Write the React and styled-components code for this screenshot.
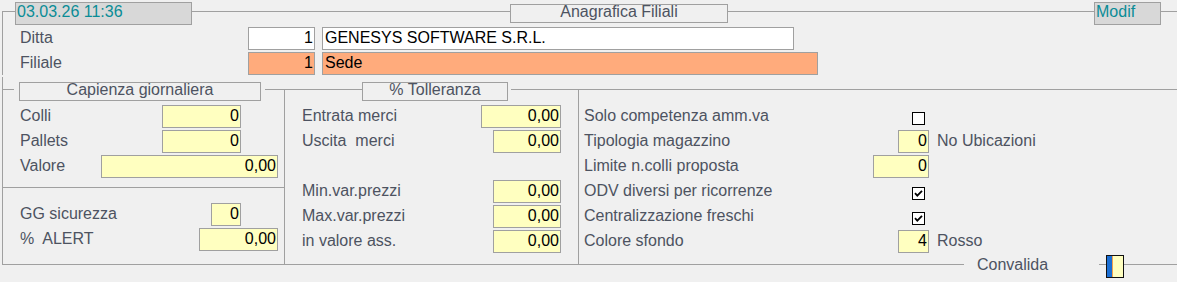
import React from "react";
import styled, { createGlobalStyle } from "styled-components";

// Anagrafica Filiali form - legacy style data entry mask

const LINE = "#a0a0a0";
const LABEL = "#4d5361";
const TEAL = "#0a8c96";

const GlobalStyle = createGlobalStyle`
  html, body {
    margin: 0;
    padding: 0;
    background: #f0f0f0;
  }
  body {
    font-family: "Liberation Sans", Arial, sans-serif;
    font-size: 16px;
  }
  * { box-sizing: border-box; }
`;

const Screen = styled.div`
  width: 1175px;
  height: 282px;
  margin-left: 2px;
  overflow: hidden;
`;

/* ---------- title bar ---------- */

const TitleBar = styled.div`
  display: flex;
  height: 23px;
  margin-top: 2px;
`;

const Corner = styled.div`
  width: 13px;
  height: 14px;
  align-self: flex-end;
  border-top: 1px solid ${LINE};
  border-left: 1px solid ${LINE};
`;

const Rule = styled.div`
  height: 1px;
  align-self: flex-start;
  margin-top: ${(p) => p.$top}px;
  background: ${LINE};
  ${(p) => (p.$w ? `width: ${p.$w}px; flex: none;` : "flex: 1;")}
  margin-left: ${(p) => p.$gapL || 0}px;
`;

const StatusBox = styled.div`
  width: ${(p) => p.$w}px;
  height: 23px;
  border: 1px solid ${LINE};
  background: #d8d8d8;
  color: ${TEAL};
  line-height: 17px;
  padding-left: 1px;
  white-space: nowrap;
`;

const CaptionBox = styled.div`
  width: ${(p) => p.$w}px;
  height: 19px;
  margin-top: ${(p) => p.$top || 0}px;
  margin-left: ${(p) => p.$gapL || 0}px;
  border: 1px solid ${LINE};
  color: ${LABEL};
  text-align: center;
  line-height: 14px;
  white-space: nowrap;
`;

/* ---------- top frame ---------- */

const TopBody = styled.div`
  height: 50px;
  padding-top: 2px;
  border-left: 1px solid ${LINE};
`;

const TopRow = styled.div`
  display: flex;
  align-items: center;
  height: 23px;
  margin-bottom: 2px;
`;

const Label = styled.div`
  color: ${LABEL};
  white-space: nowrap;
  line-height: 18px;
  margin-bottom: 2px;
  width: ${(p) => (p.$w ? `${p.$w}px` : "auto")};
  padding-left: ${(p) => p.$pl || 0}px;
  flex: none;
`;

const tones = {
  white: "#ffffff",
  orange: "#ffab7c",
  yellow: "#ffffc0",
};

const Box = styled.div`
  width: ${(p) => p.$w}px;
  height: 23px;
  flex: none;
  border: 1px solid ${LINE};
  background: ${(p) => tones[p.$tone || "yellow"]};
  color: #000;
  line-height: 19px;
  padding: 0 1px 0 2px;
  text-align: ${(p) => (p.$left ? "left" : "right")};
  white-space: nowrap;
  overflow: hidden;
  margin-left: ${(p) => (p.$ml !== undefined ? `${p.$ml}px` : "auto")};
  margin-right: ${(p) => p.$mr || 0}px;
`;

/* ---------- middle panels ---------- */

const Panels = styled.div`
  display: grid;
  grid-template-columns: 282px 294px 1fr;
  height: 175px;
  margin-top: 14px;
`;

const Panel = styled.div`
  position: relative;
  border-left: 1px solid ${LINE};

  ${(p) =>
    p.$lead &&
    `&::before {
      content: "";
      position: absolute;
      left: -1px;
      top: -12px;
      width: 1px;
      height: 12px;
      background: ${LINE};
    }`}
`;

const PanelHead = styled.div`
  display: flex;
  height: 19px;
  margin-top: -7px;
  margin-bottom: 4px;
`;

const Field = styled.div`
  display: flex;
  align-items: center;
  height: 23px;
  margin-bottom: 2px;
  padding-left: ${(p) => p.$pl}px;
`;

const Divider = styled.div`
  height: 1px;
  background: ${LINE};
  margin: 9px 0 15px;
`;

const Spacer = styled.div`
  height: 25px;
`;

const OptRow = styled.div`
  display: grid;
  grid-template-columns: 345px 1fr;
  align-items: center;
  height: 23px;
  margin-bottom: 2px;
  padding-left: 5px;
`;

const OptCell = styled.div`
  display: flex;
  align-items: center;
  height: 23px;
`;

const Suffix = styled.div`
  color: ${LABEL};
  padding-left: 8px;
  line-height: 18px;
  margin-bottom: 2px;
  white-space: nowrap;
`;

const Check = styled.svg`
  margin-left: auto;
  margin-right: 4px;
  margin-top: 4px;
  flex: none;
`;

/* ---------- footer ---------- */

const Footer = styled.div`
  display: flex;
  height: 23px;
  margin-top: -9px;
`;

const FootLabel = styled.div`
  width: 135px;
  padding-left: 13px;
  color: ${LABEL};
  line-height: 20px;
`;

const Toggle = styled.div`
  display: flex;
  width: 18px;
  height: 23px;
  border: 1px solid #111;
  background: #ffffc0;
`;

const ToggleBar = styled.div`
  width: 6px;
  background: #1b6fd4;
  border-right: 1px solid #f0a050;
`;

const CheckBox = ({ checked }) => (
  <Check width="13" height="13" viewBox="0 0 13 13">
    <rect x="0.5" y="0.5" width="12" height="12" fill="#fff" stroke="#000" />
    {checked && (
      <path d="M3 6.2 L5.3 8.6 L10 3.8" fill="none" stroke="#000" strokeWidth="1.8" />
    )}
  </Check>
);

const P1 = 17;

const App = () => (
  <>
    <GlobalStyle />
    <Screen>
      <TitleBar>
        <Corner />
        <StatusBox $w={177}>03.03.26 11:36</StatusBox>
        <Rule $top={9} $w={318} />
        <CaptionBox $w={218} $top={2}>Anagrafica Filiali</CaptionBox>
        <Rule $top={9} $w={366} />
        <StatusBox $w={67}>Modif</StatusBox>
        <Rule $top={9} />
      </TitleBar>

      <TopBody>
        <TopRow>
          <Label $w={245} $pl={P1}>Ditta</Label>
          <Box $w={67} $tone="white" $ml={0}>1</Box>
          <Box $w={472} $tone="white" $ml={7} $left>GENESYS SOFTWARE S.R.L.</Box>
        </TopRow>
        <TopRow>
          <Label $w={245} $pl={P1}>Filiale</Label>
          <Box $w={67} $tone="orange" $ml={0}>1</Box>
          <Box $w={496} $tone="orange" $ml={7} $left>Sede</Box>
        </TopRow>
      </TopBody>

      <Panels>
        <Panel $lead>
          <PanelHead>
            <Rule $top={7} $w={11} />
            <CaptionBox $w={242} $gapL={5}>Capienza giornaliera</CaptionBox>
            <Rule $top={7} $gapL={4} />
          </PanelHead>
          <Field $pl={P1}>
            <Label>Colli</Label>
            <Box $w={79} $mr={43}>0</Box>
          </Field>
          <Field $pl={P1}>
            <Label>Pallets</Label>
            <Box $w={79} $mr={43}>0</Box>
          </Field>
          <Field $pl={P1}>
            <Label>Valore</Label>
            <Box $w={177} $mr={6}>0,00</Box>
          </Field>
          <Divider />
          <Field $pl={P1}>
            <Label>GG sicurezza</Label>
            <Box $w={30} $mr={43}>0</Box>
          </Field>
          <Field $pl={P1}>
            <Label>%&nbsp; ALERT</Label>
            <Box $w={79} $mr={6}>0,00</Box>
          </Field>
        </Panel>

        <Panel>
          <PanelHead>
            <Rule $top={7} $w={77} />
            <CaptionBox $w={146}>% Tolleranza</CaptionBox>
            <Rule $top={7} $gapL={3} />
          </PanelHead>
          <Field $pl={P1}>
            <Label>Entrata merci</Label>
            <Box $w={80} $mr={17}>0,00</Box>
          </Field>
          <Field $pl={P1}>
            <Label>Uscita&nbsp; merci</Label>
            <Box $w={68} $mr={17}>0,00</Box>
          </Field>
          <Spacer />
          <Field $pl={P1}>
            <Label>Min.var.prezzi</Label>
            <Box $w={68} $mr={17}>0,00</Box>
          </Field>
          <Field $pl={P1}>
            <Label>Max.var.prezzi</Label>
            <Box $w={68} $mr={17}>0,00</Box>
          </Field>
          <Field $pl={P1}>
            <Label>in valore ass.</Label>
            <Box $w={68} $mr={17}>0,00</Box>
          </Field>
        </Panel>

        <Panel>
          <PanelHead>
            <Rule $top={7} />
          </PanelHead>
          <OptRow>
            <OptCell>
              <Label>Solo competenza amm.va</Label>
              <CheckBox />
            </OptCell>
          </OptRow>
          <OptRow>
            <OptCell>
              <Label>Tipologia magazzino</Label>
              <Box $w={31}>0</Box>
            </OptCell>
            <Suffix>No Ubicazioni</Suffix>
          </OptRow>
          <OptRow>
            <OptCell>
              <Label>Limite n.colli proposta</Label>
              <Box $w={56}>0</Box>
            </OptCell>
          </OptRow>
          <OptRow>
            <OptCell>
              <Label>ODV diversi per ricorrenze</Label>
              <CheckBox checked />
            </OptCell>
          </OptRow>
          <OptRow>
            <OptCell>
              <Label>Centralizzazione freschi</Label>
              <CheckBox checked />
            </OptCell>
          </OptRow>
          <OptRow>
            <OptCell>
              <Label>Colore sfondo</Label>
              <Box $w={31}>4</Box>
            </OptCell>
            <Suffix>Rosso</Suffix>
          </OptRow>
        </Panel>
      </Panels>

      <Footer>
        <Rule $top={9} $w={962} />
        <FootLabel>Convalida</FootLabel>
        <Rule $top={9} $w={7} />
        <Toggle>
          <ToggleBar />
        </Toggle>
        <Rule $top={9} />
      </Footer>
    </Screen>
  </>
);

export default App;
